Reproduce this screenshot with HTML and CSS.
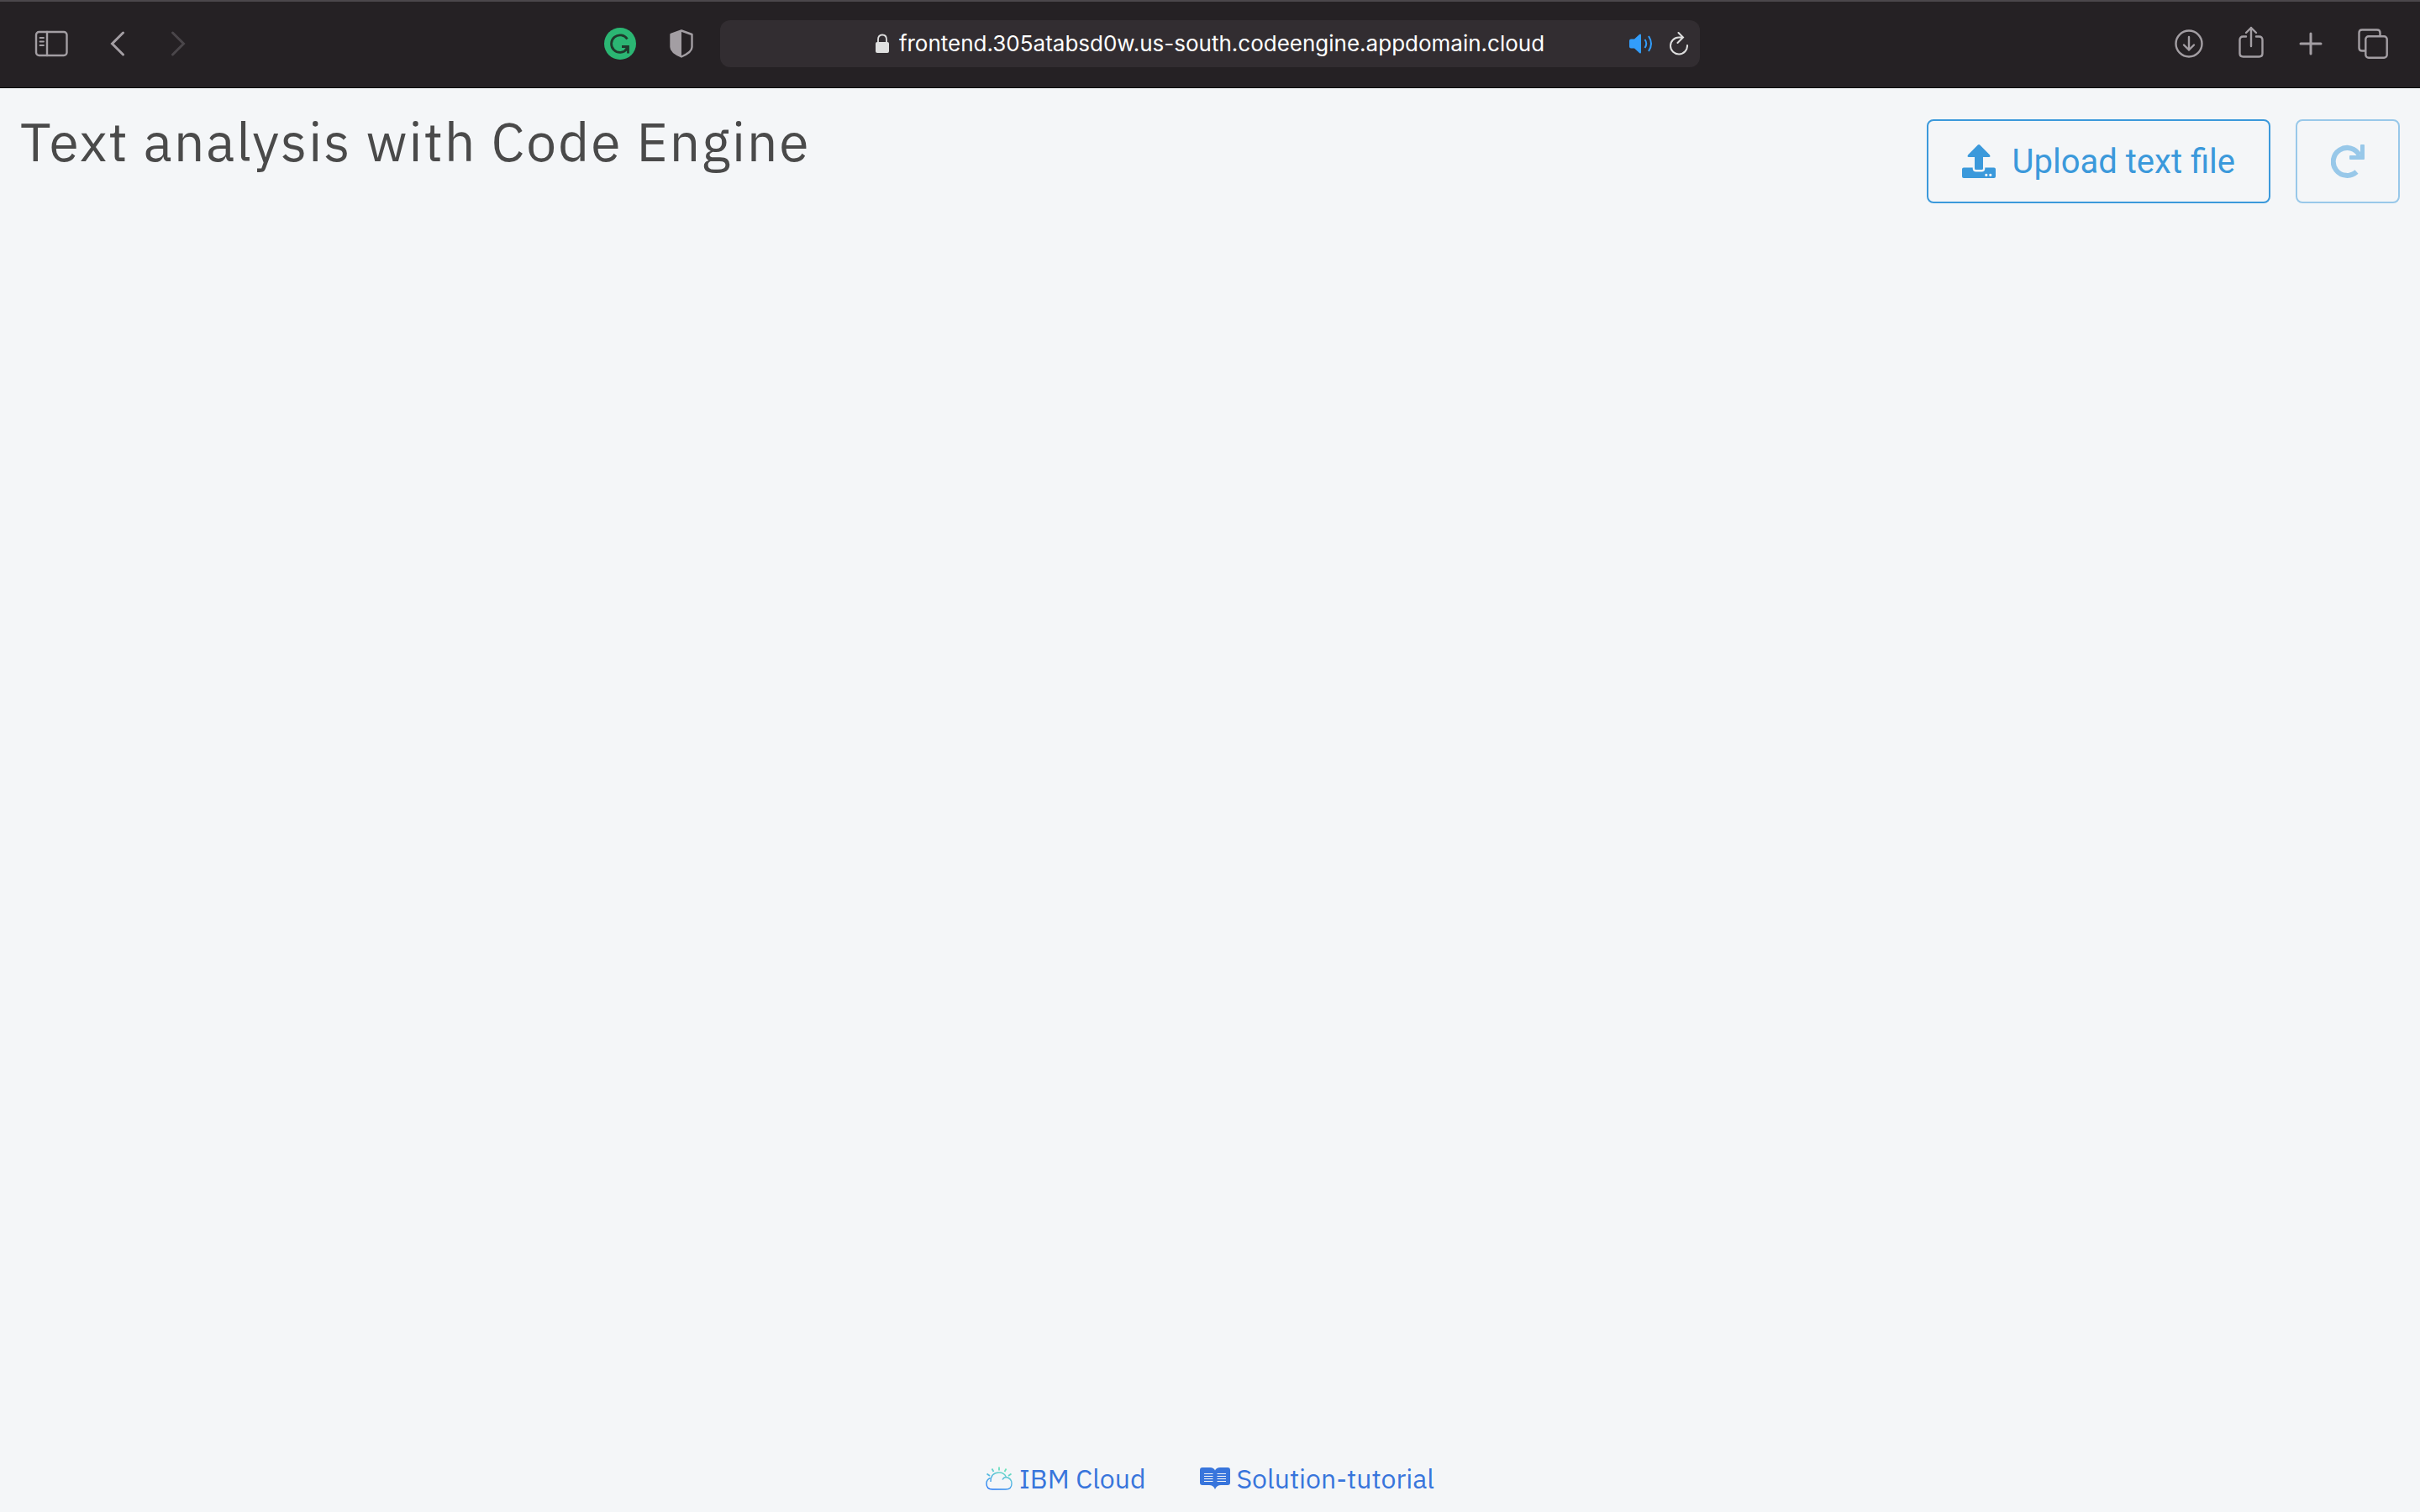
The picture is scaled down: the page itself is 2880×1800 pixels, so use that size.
FILE: index.html
```html
<!DOCTYPE html>
<html lang="en">
<head>
<meta charset="utf-8">
<title>Text analysis with Code Engine</title>
<link rel="stylesheet" href="styles.css">
</head>
<body>
<div class="toolbar">
  <div class="tools tools-start">
    <div class="tools tools-nav">
      <button class="tool" aria-label="Show sidebar"><svg width="43" height="32" viewBox="-3 0 43 32" fill="none" stroke="currentColor" stroke-width="2.400" stroke-linecap="round"><rect x="2" y="2" width="36.500" height="28" rx="3.500"/><path d="M15 2v28"/><path d="M6.500 9h4.500M6.500 13.500h4.500M6.500 18h4.500" stroke-width="1.800"/></svg></button>
      <div class="tools tools-history">
        <button class="tool" aria-label="Back"><svg width="18" height="30" viewBox="0 0 18 30" fill="none" stroke="currentColor" stroke-width="3" stroke-linecap="round"><path d="M15.500 2 2.500 15l13 13"/></svg></button>
        <button class="tool" aria-label="Forward" disabled><svg width="18" height="30" viewBox="0 0 18 30" fill="none" stroke="currentColor" stroke-width="3" stroke-linecap="round"><path d="m2.500 2 13 13-13 13"/></svg></button>
      </div>
    </div>
    <div class="tools tools-extensions">
      <button class="tool" aria-label="Grammarly"><svg width="38" height="38" viewBox="0 0 38 38"><circle cx="19" cy="19" r="19" fill="#2bb673"/><path d="M27.500 13.500a10.300 10.300 0 1 0-.5 12M21 22.500h7.500v8M28.500 22.500l-4 5" fill="none" stroke="#1f3a2c" stroke-width="2.800"/></svg></button>
      <button class="tool" aria-label="Privacy report"><svg width="28" height="34" viewBox="0 0 28 34"><path d="M14 1.500 26.500 6v15q0 6-12.500 11.500Q1.500 27 1.500 21V6z" fill="none" stroke="currentColor" stroke-width="2.400" stroke-linejoin="round"/><path d="M14 1 1 6v15q0 7 13 12z" fill="currentColor"/></svg></button>
    </div>
  </div>
  <div class="address">
    <div class="location">
      <svg width="16" height="24" viewBox="0 0 16 24"><rect y="10" width="16" height="13" rx="2" fill="#dfdfdf"/><path d="M3 11V7q0-5.500 5-5.500T13 7v4" fill="none" stroke="#dfdfdf" stroke-width="1.800"/></svg>
      <span>frontend.305atabsd0w.us-south.codeengine.appdomain.cloud</span>
    </div>
    <div class="address-tools">
      <button class="tool tool-sound" aria-label="Mute this tab"><svg width="28" height="24" viewBox="0 0 28 24"><path d="M2 6.500h4L12 1q2-1.500 2 1v20q0 2.500-2 1l-6-5.500H2q-2 0-2-2v-7q0-2 2-2z" fill="currentColor"/><path d="M18.500 7q3.500 5 0 10M23 3q6 9 0 18" fill="none" stroke="currentColor" stroke-width="2"/></svg></button>
      <button class="tool tool-reload" aria-label="Reload"><svg width="22" height="30" viewBox="0 0 22 30" fill="none" stroke="currentColor" stroke-width="2" stroke-linecap="round"><path d="M14.500 7.500H11A10 10 0 1 0 21 17M10.500 2l5.500 5.500-6.500 6.500"/></svg></button>
    </div>
  </div>
  <div class="tools tools-end">
    <button class="tool" aria-label="Downloads"><svg width="34" height="34" viewBox="0 0 34 34" fill="none" stroke="currentColor" stroke-width="2.400" stroke-linecap="round" stroke-linejoin="round"><circle cx="17" cy="17" r="15.500"/><path d="M17 9v15.500M11 18.500l6 6 6-6"/></svg></button>
    <button class="tool tool-share" aria-label="Share"><svg width="30" height="38" viewBox="0 0 30 38" fill="none" stroke="currentColor" stroke-width="2.400" stroke-linecap="round" stroke-linejoin="round"><path d="M9 12.500H5.500q-4 0-4 4v16q0 4 4 4h19q4 0 4-4v-16q0-4-4-4H21M15 24V2M9 8l6-6 6 6"/></svg></button>
    <button class="tool" aria-label="New tab"><svg width="28" height="28" viewBox="0 0 28 28" fill="none" stroke="currentColor" stroke-width="3" stroke-linecap="round"><path d="M14 2v24M2 14h24"/></svg></button>
    <button class="tool" aria-label="Tab overview"><svg width="36" height="36" viewBox="0 0 36 36" fill="none" stroke="currentColor" stroke-width="2.400"><path d="M26.500 9V5q0-3.500-3.500-3.500H5Q1.500 1.500 1.500 5v18q0 3.500 3.500 3.500h4"/><rect x="9.300" y="9.300" width="25.400" height="25.400" rx="3.500"/></svg></button>
  </div>
</div>
<main class="page">
  <header class="page-header">
    <h1>Text analysis with Code Engine</h1>
    <div class="actions">
      <button class="action"><svg width="40" height="40" viewBox="0 0 40 40" fill="currentColor"><path d="M18.800.6q1.200-1.200 2.400 0L32.800 12.200Q34.500 15 32 15h-7v13.500q0 1.500-1.500 1.500h-7q-1.500 0-1.500-1.500V15H8q-2.500 0-.8-2.800z"/><path d="M2 27.500h10.700v1q0 4 4 4h6.600q4 0 4-4v-1H38q2 0 2 2V38q0 2-2 2H2q-2 0-2-2v-8.500q0-2 2-2zM28.800 34.800a1.600 1.600 0 1 0 .01 0zM33.800 34.800a1.600 1.600 0 1 0 .01 0z" fill-rule="evenodd"/></svg><span>Upload text file</span></button>
      <button class="action action-refresh" aria-label="Refresh" disabled><svg width="40" height="40" viewBox="0 0 40 40"><path d="M34 13A16.500 16.500 0 1 0 30.500 32.500" fill="none" stroke="currentColor" stroke-width="6"/><path d="M36 0h3q1 0 1 1v16q0 1-1 1H23q-1 0-1-1v-3q0-1 1-1h12V1q0-1 1-1z" fill="currentColor"/></svg></button>
    </div>
  </header>
  <footer class="page-footer">
    <a href="#cloud"><svg width="32" height="28" viewBox="0 0 32 28" fill="none" stroke="url(#sky)" stroke-width="1.400"><defs><linearGradient id="sky" gradientUnits="userSpaceOnUse" x1="8" y1="28" x2="18" y2="0"><stop stop-color="#2074f5"/><stop offset="0.500" stop-color="#58b8e2"/><stop offset="1" stop-color="#6ee8b8"/></linearGradient></defs><path d="M6 18Q6 7 16 7q6 0 8.500 5.500Q31 14 31 20q0 7-7 7H8q-7 0-7-7 0-4.500 4.500-6.500M20 15.500q1.500-3 4.500-3"/><path d="M16 .5v4M7.500 2.500l2 3.500M24.500 2.500l-2 3.500M1.500 8.500 5 11M30.500 8.500 27 11" stroke-width="1.800"/></svg>IBM Cloud</a>
    <a href="#tutorial"><svg width="36" height="26" viewBox="0 0 36 26"><path d="M3 0h9q4.500 0 6 3.500Q19.500 0 24 0h9q3 0 3 3v15q0 3-3 3h-8q-5 0-7 5-2-5-7-5H3q-3 0-3-3V3q0-3 3-3z" fill="currentColor"/><path d="M5 7.500h10.500M5 10.500h10.500M5 13.500h10.500M5 16.500h10.500M20.500 7.500H31M20.500 10.500H31M20.500 13.500H31M20.500 16.500H31" stroke="#f4f6f8" stroke-width="1.200"/></svg>Solution-tutorial</a>
  </footer>
</main>
</body>
</html>
```
FILE: styles.css
```css
* { box-sizing: border-box; }

body {
  margin: 0;
  min-height: 100vh;
  display: flex;
  flex-direction: column;
  background: #f4f6f8;
  font-family: Inter, "Liberation Sans", sans-serif;
}

button {
  padding: 0;
  border: 0;
  background: none;
  color: inherit;
  font: inherit;
}

svg { display: block; flex: none; }

/* Browser toolbar */
.toolbar {
  display: grid;
  grid-template-columns: 1fr minmax(0, 1166px) 1fr;
  align-items: center;
  gap: 32px;
  padding: 22px 38px 24px;
  border-top: 2px solid #4b474b;
  border-bottom: 1px solid #000;
  background: #252124;
  color: #a39ea3;
}

.tools { display: flex; align-items: center; }
.tools-start { justify-content: space-between; }
.tools-nav { gap: 50px; }
.tools-history { gap: 54px; }
.tools-extensions { gap: 40px; }
.tools-end { justify-content: flex-end; gap: 42px; }
.tool:disabled { color: #4a464a; }
.tool-share { padding-bottom: 4px; }

.address {
  display: grid;
  grid-template-columns: 1fr auto 1fr;
  align-items: center;
  height: 56px;
  padding: 0 14px;
  border-radius: 12px;
  background: #322d31;
}

.location {
  grid-column: 2;
  display: flex;
  align-items: center;
  gap: 12px;
  color: #fff;
  font-size: 26px;
  line-height: 32px;
}

.address-tools {
  display: flex;
  justify-content: flex-end;
  align-items: center;
  gap: 20px;
}

.tool-sound { color: #329dfb; }
.tool-reload { color: #dfdfdf; }

/* Page */
.page {
  flex: 1;
  display: flex;
  flex-direction: column;
  justify-content: space-between;
}

.page-header {
  display: flex;
  justify-content: space-between;
  align-items: flex-start;
  padding: 23px 24px 0;
}

h1 {
  margin: 0;
  color: #4a4a4a;
  font-family: "IBM Plex Sans", "Noto Sans", sans-serif;
  font-size: 64px;
  font-weight: 400;
  letter-spacing: 2px;
  line-height: 80px;
}

.actions { display: flex; gap: 30px; padding-top: 14px; }

.action {
  display: flex;
  align-items: center;
  gap: 20px;
  height: 100px;
  padding: 0 40px;
  border: 2px solid #3b99db;
  border-radius: 8px;
  color: #3b99db;
  font-family: Roboto, "Liberation Sans", sans-serif;
  font-size: 40px;
}

.action:disabled { border-color: #98c8e9; color: #98c8e9; }

.page-footer {
  display: flex;
  justify-content: center;
  gap: 64px;
  padding-bottom: 20px;
  font-family: "IBM Plex Sans", "Noto Sans", sans-serif;
  font-size: 32px;
  line-height: 40px;
}

.page-footer a {
  display: flex;
  align-items: center;
  gap: 8px;
  color: #3875dc;
  text-decoration: none;
}
```
